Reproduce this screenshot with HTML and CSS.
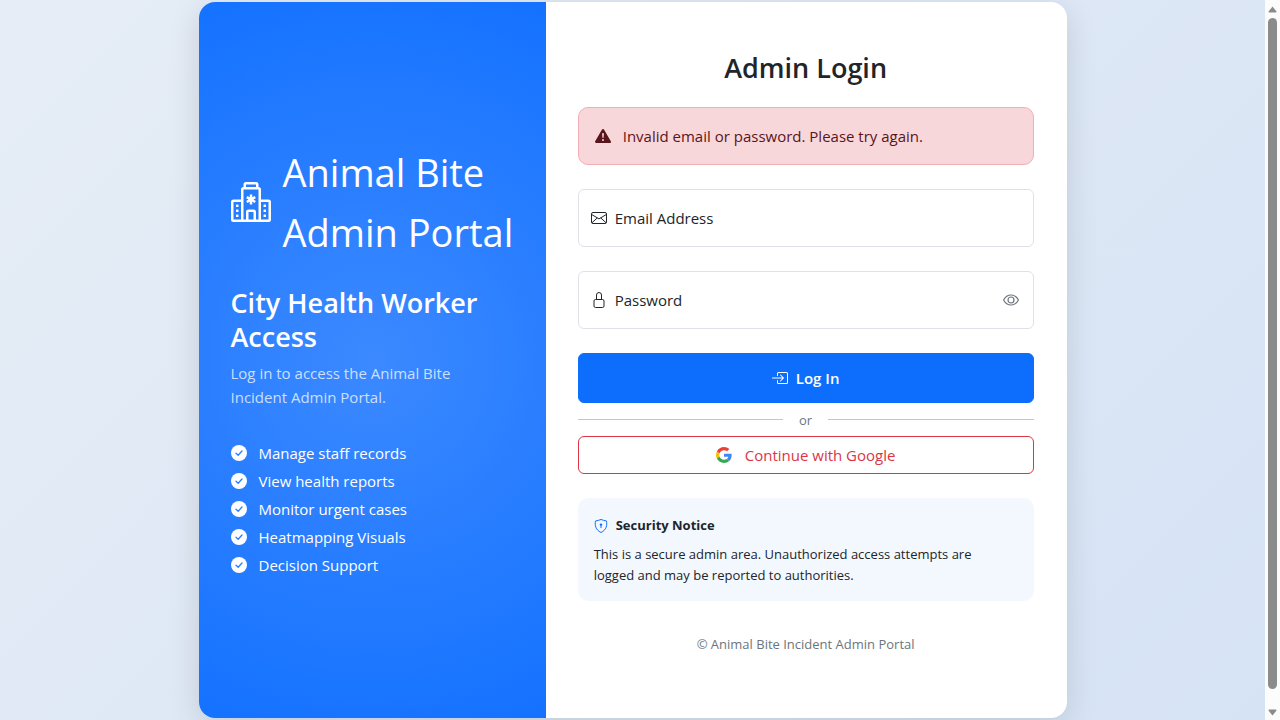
FILE: index.html
```html
<!DOCTYPE html>
<html lang="en">
<head>
<meta charset="utf-8">
<meta name="viewport" content="width=device-width, initial-scale=1">
<title>Admin Login</title>
<link rel="stylesheet" href="styles.css">
</head>
<body>
<div class="page">
  <main class="stage">
    <div class="card">
      <section class="intro">
        <div class="brand">
          <svg class="brand-icon" viewBox="0 0 16 16" fill="currentColor" aria-hidden="true"><path d="M8.5 5.034v1.1l.953-.55.5.867L9 7l.953.55-.5.866-.953-.55v1.1h-1v-1.1l-.953.55-.5-.866L7 7l-.953-.55.5-.866.953.55v-1.1h1ZM13.25 9a.25.25 0 0 0-.25.25v.5c0 .138.112.25.25.25h.5a.25.25 0 0 0 .25-.25v-.5a.25.25 0 0 0-.25-.25h-.5ZM13 11.25a.25.25 0 0 1 .25-.25h.5a.25.25 0 0 1 .25.25v.5a.25.25 0 0 1-.25.25h-.5a.25.25 0 0 1-.25-.25v-.5Zm.25 1.75a.25.25 0 0 0-.25.25v.5c0 .138.112.25.25.25h.5a.25.25 0 0 0 .25-.25v-.5a.25.25 0 0 0-.25-.25h-.5Zm-11-4a.25.25 0 0 0-.25.25v.5c0 .138.112.25.25.25h.5A.25.25 0 0 0 3 9.75v-.5A.25.25 0 0 0 2.75 9h-.5Zm0 2a.25.25 0 0 0-.25.25v.5c0 .138.112.25.25.25h.5a.25.25 0 0 0 .25-.25v-.5a.25.25 0 0 0-.25-.25h-.5ZM2 13.25a.25.25 0 0 1 .25-.25h.5a.25.25 0 0 1 .25.25v.5a.25.25 0 0 1-.25.25h-.5a.25.25 0 0 1-.25-.25v-.5Z"/><path d="M5 1a1 1 0 0 1 1-1h4a1 1 0 0 1 1 1v1a1 1 0 0 1 1 1v4h3a1 1 0 0 1 1 1v7a1 1 0 0 1-1 1H1a1 1 0 0 1-1-1V8a1 1 0 0 1 1-1h3V3a1 1 0 0 1 1-1V1Zm2 14h2v-3H7v3Zm3 0h1V3H5v12h1v-3a1 1 0 0 1 1-1h2a1 1 0 0 1 1 1v3Zm0-14H6v1h4V1Zm2 7v7h3V8h-3Zm-8 7V8H1v7h3Z"/></svg>
          <span class="brand-name">Animal Bite Admin Portal</span>
        </div>
        <h2 class="heading intro-heading">City Health Worker Access</h2>
        <p class="intro-text">Log in to access the Animal Bite Incident Admin Portal.</p>
        <ul class="features">
          <li class="feature"><svg class="icon icon-check" viewBox="0 0 16 16" aria-hidden="true"><circle cx="8" cy="8" r="8"/><path d="M5 8.200l2.200 2.100 3.800-4.300"/></svg>Manage staff records</li>
          <li class="feature"><svg class="icon icon-check" viewBox="0 0 16 16" aria-hidden="true"><circle cx="8" cy="8" r="8"/><path d="M5 8.200l2.200 2.100 3.800-4.300"/></svg>View health reports</li>
          <li class="feature"><svg class="icon icon-check" viewBox="0 0 16 16" aria-hidden="true"><circle cx="8" cy="8" r="8"/><path d="M5 8.200l2.200 2.100 3.800-4.300"/></svg>Monitor urgent cases</li>
          <li class="feature"><svg class="icon icon-check" viewBox="0 0 16 16" aria-hidden="true"><circle cx="8" cy="8" r="8"/><path d="M5 8.200l2.200 2.100 3.800-4.300"/></svg>Heatmapping Visuals</li>
          <li class="feature"><svg class="icon icon-check" viewBox="0 0 16 16" aria-hidden="true"><circle cx="8" cy="8" r="8"/><path d="M5 8.200l2.200 2.100 3.800-4.300"/></svg>Decision Support</li>
        </ul>
      </section>

      <section class="login">
        <h1 class="heading login-heading">Admin Login</h1>
        <div class="alert" role="alert">
          <svg class="icon" viewBox="0 0 16 16" fill="currentColor" aria-hidden="true"><path d="M8.982 1.566a1.130 1.130 0 0 0-1.960 0L.165 13.233c-.457.778.091 1.767.980 1.767h13.713c.889 0 1.438-.990.980-1.767L8.982 1.566zM8 5c.535 0 .954.462.900.995l-.350 3.507a.552.552 0 0 1-1.100 0L7.100 5.995A.905.905 0 0 1 8 5zm.002 6a1 1 0 1 1 0 2 1 1 0 0 1 0-2z"/></svg>
          <span>Invalid email or password. Please try again.</span>
        </div>
        <form class="form">
          <div class="field">
            <label class="field-label" for="email">
              <svg class="icon" viewBox="0 0 16 16" fill="none" stroke="currentColor" aria-hidden="true"><rect x=".5" y="2.500" width="15" height="11" rx="1.500"/><path d="M.700 4.500 8 8.900l7.300-4.400M.900 12.800l5.400-4.900M15.100 12.800 9.700 7.900"/></svg>
              Email Address
            </label>
            <input class="field-input" id="email" name="email" type="email" autocomplete="username">
          </div>
          <div class="field">
            <label class="field-label" for="password">
              <svg class="icon" viewBox="0 0 16 16" fill="none" stroke="currentColor" aria-hidden="true"><rect x="3" y="7.500" width="10" height="8" rx="1.500"/><path d="M5.500 7.500V3a2.500 2.500 0 0 1 5 0v4.500"/></svg>
              Password
            </label>
            <input class="field-input" id="password" name="password" type="password" autocomplete="current-password">
            <button class="reveal" type="button" aria-label="Show password">
              <svg class="icon" viewBox="0 0 16 16" fill="none" stroke="currentColor" stroke-width="1.200" aria-hidden="true"><path d="M.600 8S3.200 3 8 3s7.400 5 7.400 5-2.600 5-7.400 5S.600 8 .600 8Z"/><circle cx="8" cy="8" r="3"/></svg>
            </button>
          </div>
          <button class="button button-primary" type="submit">
            <svg class="icon" viewBox="0 0 16 16" fill="currentColor" aria-hidden="true"><path d="M6 3.500a.5.5 0 0 1 .5-.5h8a.5.5 0 0 1 .5.5v9a.5.5 0 0 1-.5.5h-8a.5.5 0 0 1-.5-.5v-2a.5.5 0 0 0-1 0v2A1.500 1.500 0 0 0 6.500 14h8a1.500 1.500 0 0 0 1.500-1.500v-9A1.500 1.500 0 0 0 14.500 2h-8A1.500 1.500 0 0 0 5 3.500v2a.5.5 0 0 0 1 0v-2z"/><path d="M11.854 8.354a.5.5 0 0 0 0-.708l-3-3a.5.5 0 1 0-.708.708L10.293 7.500H.5a.5.5 0 0 0 0 1h9.793l-2.147 2.146a.5.5 0 0 0 .708.708l3-3z"/></svg>
            Log In
          </button>
        </form>
        <div class="divider">or</div>
        <button class="button button-google" type="button">
          <svg class="icon" viewBox="0 0 48 48" aria-hidden="true"><path fill="#EA4335" d="M24 9.500c3.540 0 6.710 1.220 9.210 3.600l6.850-6.850C35.900 2.380 30.470 0 24 0 14.620 0 6.510 5.380 2.560 13.220l7.980 6.190C12.430 13.720 17.740 9.500 24 9.500z"/><path fill="#4285F4" d="M46.980 24.550c0-1.570-.15-3.090-.38-4.550H24v9.020h12.940c-.58 2.960-2.260 5.480-4.780 7.180l7.730 6c4.510-4.180 7.090-10.360 7.090-17.650z"/><path fill="#FBBC05" d="M10.530 28.590c-.48-1.450-.76-2.990-.76-4.590s.27-3.140.76-4.590l-7.980-6.190C.920 16.460 0 20.120 0 24c0 3.880.920 7.540 2.560 10.780l7.970-6.190z"/><path fill="#34A853" d="M24 48c6.480 0 11.930-2.130 15.890-5.810l-7.730-6c-2.150 1.450-4.920 2.300-8.160 2.300-6.260 0-11.570-4.220-13.470-9.910l-7.980 6.190C6.510 42.620 14.620 48 24 48z"/></svg>
          Continue with Google
        </button>
        <aside class="notice">
          <h2 class="notice-title">
            <svg class="notice-icon" viewBox="0 0 14 14" fill="none" stroke="currentColor" aria-hidden="true"><path d="M7 .5C5.300 1.100 3.200 1.700 1.500 2 .700 6 1.500 11 7 13.500 12.500 11 13.300 6 12.500 2 10.800 1.700 8.700 1.100 7 .500Z"/><circle cx="7" cy="5.600" r="1.200" fill="currentColor" stroke="none"/><path d="M7 6v3"/></svg>
            Security Notice
          </h2>
          <p class="notice-text">This is a secure admin area. Unauthorized access attempts are logged and may be reported to authorities.</p>
        </aside>
        <footer class="copyright">© Animal Bite Incident Admin Portal</footer>
      </section>
    </div>
  </main>
  <div class="scrollbar" aria-hidden="true">
    <svg class="scroll-arrow" viewBox="0 0 9 7"><path d="M4.500.5 8.500 5.500Q8.700 6.500 7.500 6.500h-6Q.300 6.500.5 5.500Z"/></svg>
    <div class="scroll-thumb"></div>
    <svg class="scroll-arrow" viewBox="0 0 9 7"><path d="M4.500 6.500.5 1.500Q.300.5 1.500.5h6Q8.700.5 8.500 1.500Z"/></svg>
  </div>
</div>
</body>
</html>
```
FILE: styles.css
```css
*, *::before, *::after { box-sizing: border-box; }

body {
  margin: 0;
  color: #212529;
  font-family: "Segoe UI", "Open Sans", "Noto Sans", sans-serif;
  font-size: 15px;
  line-height: 24px;
}

h1, h2, p, ul { margin: 0; padding: 0; }

button, input { font: inherit; }

.page {
  display: flex;
  min-height: 100vh;
}

.stage {
  flex: 1;
  display: flex;
  justify-content: center;
  padding: 2px 0;
  background: linear-gradient(135deg, #e6edf6, #d6e3f5);
  overflow: hidden;
}

.card {
  display: grid;
  grid-template-columns: 2fr 3fr;
  width: 100%;
  max-width: 868px;
  border-radius: 16px;
  background: #fff;
  box-shadow: 0 8px 32px rgba(0, 0, 0, 0.13);
  overflow: hidden;
}

.icon {
  flex: none;
  width: 16px;
  height: 16px;
}

.heading {
  font-size: 27px;
  font-weight: 600;
  line-height: 34px;
}

/* Left panel */
.intro {
  display: flex;
  flex-direction: column;
  justify-content: center;
  padding: 32px 32px 34px;
  color: #fff;
  background: radial-gradient(circle, #3c89ff, #1472ff 100%);
}

.brand {
  display: flex;
  align-items: center;
  gap: 12px;
  margin-bottom: 24px;
  font-size: 38px;
  line-height: 60px;
}

.brand-icon {
  flex: none;
  width: 40px;
  height: 40px;
}

.intro-heading { margin-bottom: 7px; }

.intro-text {
  max-width: 248px;
  margin-bottom: 32px;
  color: rgba(255, 255, 255, 0.75);
  font-weight: 500;
}

.features {
  display: grid;
  gap: 4px;
  list-style: none;
}

.feature {
  display: flex;
  align-items: center;
  gap: 12px;
}

.icon-check { fill: #fff; }

.icon-check path {
  fill: none;
  stroke: #2a7fff;
  stroke-width: 1.3;
  stroke-linecap: round;
  stroke-linejoin: round;
}

/* Right panel */
.login {
  display: flex;
  flex-direction: column;
  padding: 49px 33px 48px 32px;
}

.login-heading {
  margin-bottom: 22px;
  text-align: center;
}

.alert {
  display: flex;
  align-items: center;
  gap: 12px;
  padding: 16px;
  margin-bottom: 24px;
  border: 1px solid #f1aeb5;
  border-radius: 10px;
  background: #f8d7da;
  color: #58151c;
}

.form {
  display: grid;
  gap: 24px;
}

.field {
  display: flex;
  align-items: center;
  height: 58px;
  padding: 0 12px;
  border: 1px solid #dee2e6;
  border-radius: 6px;
}

.field:focus-within { border-color: #86b7fe; }

.field-label {
  display: flex;
  align-items: center;
  gap: 8px;
}

.field-input {
  flex: 1;
  min-width: 0;
  height: 100%;
  margin-left: 8px;
  border: 0;
  outline: 0;
  background: transparent;
}

.reveal {
  display: flex;
  padding: 2px;
  border: 0;
  background: none;
  color: #6c757d;
  cursor: pointer;
}

.button {
  display: flex;
  align-items: center;
  justify-content: center;
  padding: 6px 12px;
  border: 1px solid;
  border-radius: 6px;
  cursor: pointer;
}

.button-primary {
  gap: 8px;
  height: 50px;
  border-color: #0d6efd;
  background: #0d6efd;
  color: #fff;
  font-weight: 600;
}

.button-google {
  gap: 13px;
  margin-bottom: 24px;
  border-color: #dc3545;
  background: #fff;
  color: #dc3545;
}

.divider {
  display: flex;
  align-items: center;
  gap: 16px;
  height: 33px;
  color: #6c757d;
  font-size: 13px;
}

.divider::before,
.divider::after {
  content: "";
  flex: 1;
  height: 1px;
  background: #c4c6c8;
}

.notice {
  padding: 17px 16px 15px;
  margin-bottom: 33px;
  border-radius: 10px;
  background: #f3f8ff;
  font-size: 13px;
  line-height: 21px;
}

.notice-title {
  display: flex;
  align-items: center;
  gap: 8px;
  margin-bottom: 8px;
  font-size: 13px;
  font-weight: 700;
}

.notice-icon {
  width: 14px;
  height: 14px;
  color: #0d6efd;
}

.notice-text { max-width: 400px; }

.copyright {
  color: #6c757d;
  font-size: 13px;
  line-height: 21px;
  text-align: center;
}

/* Scroll track */
.scrollbar {
  display: flex;
  flex-direction: column;
  align-items: center;
  gap: 5px;
  width: 15px;
  padding: 6px 0 4px;
  background: #fcfcfc;
}

.scroll-arrow {
  width: 9px;
  height: 7px;
  fill: #8b8b8b;
}

.scroll-thumb {
  width: 9px;
  flex: 1;
  margin-bottom: 15px;
  border-radius: 5px;
  background: #8b8b8b;
}
```
